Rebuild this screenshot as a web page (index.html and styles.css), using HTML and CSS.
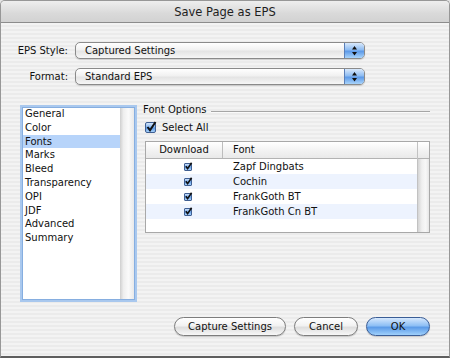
FILE: index.html
```html
<!DOCTYPE html>
<html lang="en">
<head>
<meta charset="UTF-8">
<meta name="viewport" content="width=device-width, initial-scale=1.0">
<title>Save Page as EPS</title>
<link rel="stylesheet" href="styles.css">
</head>
<body>
  <div class="window">
    <div class="titlebar">Save Page as EPS</div>

    <div class="content">
      <div class="field">
        <span class="field-label">EPS Style:</span>
        <div class="popup">
          <span class="popup-text">Captured Settings</span>
          <span class="popup-arrows">
            <svg width="19" height="17" viewBox="0 0 19 17"><path d="M7 7.5h5L9.5 4z M7 10h5l-2.5 3.5z" fill="#111"/></svg>
          </span>
        </div>
      </div>
      <div class="field">
        <span class="field-label">Format:</span>
        <div class="popup">
          <span class="popup-text">Standard EPS</span>
          <span class="popup-arrows">
            <svg width="19" height="17" viewBox="0 0 19 17"><path d="M7 7.5h5L9.5 4z M7 10h5l-2.5 3.5z" fill="#111"/></svg>
          </span>
        </div>
      </div>

      <div class="main">
        <div class="list">
          <ul class="list-items">
            <li>General</li>
            <li>Color</li>
            <li class="selected">Fonts</li>
            <li>Marks</li>
            <li>Bleed</li>
            <li>Transparency</li>
            <li>OPI</li>
            <li>JDF</li>
            <li>Advanced</li>
            <li>Summary</li>
          </ul>
          <div class="list-scroll"></div>
        </div>

        <div class="pane">
          <div class="group-title"><span>Font Options</span></div>
          <div class="check-row">
            <span class="checkbox">
              <svg width="13" height="13" viewBox="0 0 13 13"><path d="M2.5 6l2.5 3.2L10.5 1" fill="none" stroke="#111" stroke-width="2"/></svg>
            </span>
            <span>Select All</span>
          </div>

          <div class="table">
            <div class="table-body">
              <div class="thead">
                <div class="col-dl">Download</div>
                <div class="col-font">Font</div>
              </div>
              <div class="row">
                <div class="col-dl"><span class="mini-check"><svg width="9" height="9" viewBox="0 0 9 9"><path d="M1.8 4.2l1.8 2.4L7.6 0.8" fill="none" stroke="#111" stroke-width="1.6"/></svg></span></div>
                <div class="col-font">Zapf Dingbats</div>
              </div>
              <div class="row">
                <div class="col-dl"><span class="mini-check"><svg width="9" height="9" viewBox="0 0 9 9"><path d="M1.8 4.2l1.8 2.4L7.6 0.8" fill="none" stroke="#111" stroke-width="1.6"/></svg></span></div>
                <div class="col-font">Cochin</div>
              </div>
              <div class="row">
                <div class="col-dl"><span class="mini-check"><svg width="9" height="9" viewBox="0 0 9 9"><path d="M1.8 4.2l1.8 2.4L7.6 0.8" fill="none" stroke="#111" stroke-width="1.6"/></svg></span></div>
                <div class="col-font">FrankGoth BT</div>
              </div>
              <div class="row">
                <div class="col-dl"><span class="mini-check"><svg width="9" height="9" viewBox="0 0 9 9"><path d="M1.8 4.2l1.8 2.4L7.6 0.8" fill="none" stroke="#111" stroke-width="1.6"/></svg></span></div>
                <div class="col-font">FrankGoth Cn BT</div>
              </div>
            </div>
            <div class="table-scroll">
              <div class="corner"></div>
              <div class="track"></div>
            </div>
          </div>
        </div>
      </div>

      <div class="buttons">
        <button class="btn btn-wide">Capture Settings</button>
        <button class="btn">Cancel</button>
        <button class="btn btn-default">OK</button>
      </div>
    </div>
  </div>
</body>
</html>
```

FILE: styles.css
```css
html, body {
  margin: 0;
  padding: 0;
  background: #e4e4e4;
}

body {
  font-family: "Lucida Grande", "DejaVu Sans", sans-serif;
  font-size: 10px;
  color: #111;
}

.window {
  box-sizing: border-box;
  width: 450px;
  height: 358px;
  border: 1px solid #979797;
  border-bottom: 2px solid #5e5e5e;
  border-radius: 5px 5px 0 0;
  overflow: hidden;
  background: repeating-linear-gradient(#ebebeb 0, #ebebeb 2px, #f3f3f3 2px, #f3f3f3 4px);
}

.titlebar {
  height: 21px;
  line-height: 22px;
  text-align: center;
  font-size: 11.5px;
  color: #1e1e1e;
  background: linear-gradient(#eeeeee, #d9d9d9 60%, #d2d2d2);
  border-bottom: 1px solid #8c8c8c;
}

.content {
  padding-top: 19px;
}

/* popup rows */
.field {
  display: flex;
  align-items: center;
  margin-bottom: 9px;
}

.field-label {
  width: 67px;
  text-align: right;
  margin-right: 7px;
}

.popup {
  box-sizing: border-box;
  display: flex;
  width: 290px;
  height: 17px;
  border: 1px solid #8a8a8a;
  border-radius: 5px;
  background: linear-gradient(#ffffff, #f1f1f1 45%, #e4e4e4 55%, #f6f6f6);
  box-shadow: 0 1px 1px rgba(0, 0, 0, 0.15);
  overflow: hidden;
}

.popup-text {
  flex: 1;
  line-height: 15px;
  padding-left: 9px;
}

.popup-arrows {
  width: 19px;
  border-left: 1px solid #5a7fb8;
  background: linear-gradient(#d9e9fc, #8ebcf2 45%, #5d9ae8 55%, #a9d4fb);
}

.popup-arrows svg {
  display: block;
  margin-top: -1px;
}

/* main area */
.main {
  display: flex;
  margin-top: 20px;
}

.list {
  box-sizing: border-box;
  display: flex;
  width: 117px;
  height: 197px;
  margin-left: 19px;
  border: 2px solid #a9c8ee;
  box-shadow: inset 0 0 0 1px #86aee0;
  background: #fff;
  padding: 0 1px 1px 1px;
}

.list-items {
  flex: 1;
  list-style: none;
  margin: 0;
  padding: 0;
}

.list-items li {
  height: 13.8px;
  line-height: 13.8px;
  padding-left: 2px;
}

.list-items li.selected {
  background: #b7d4fa;
}

.list-scroll {
  width: 14px;
  margin-top: 1px;
  background: linear-gradient(to right, #cfcfcf, #eeeeee 25%, #fafafa 60%, #e9e9e9);
}

.pane {
  width: 287px;
  margin-left: 6px;
  margin-top: -1px;
}

.group-title {
  display: flex;
  align-items: center;
  line-height: 12px;
}

.group-title::after {
  content: "";
  flex: 1;
  height: 1px;
  margin-left: 4px;
  margin-top: 2px;
  background: #a6a6a6;
  box-shadow: 0 1px 0 #fafafa;
}

.check-row {
  display: flex;
  align-items: center;
  margin-top: 6px;
  margin-left: 2px;
}

.checkbox {
  box-sizing: border-box;
  position: relative;
  width: 11px;
  height: 11px;
  margin-right: 6px;
  border: 1px solid #3f5f93;
  border-radius: 2px;
  background: linear-gradient(#d6e7fc, #86b7f0 45%, #5b97e5 55%, #a8d2fa);
}

.checkbox svg {
  position: absolute;
  left: -1px;
  top: -2px;
}

/* font table */
.table {
  box-sizing: border-box;
  display: flex;
  width: 285px;
  height: 92px;
  margin-top: 8px;
  margin-left: 2px;
  border: 1px solid #a8a8a8;
  background: #fff;
}

.table-body {
  flex: 1;
}

.thead {
  display: flex;
  height: 16px;
  line-height: 16px;
  border-bottom: 1px solid #b3b3b3;
  background: linear-gradient(#ffffff, #f3f3f3 50%, #e9e9e9);
}

.col-dl {
  width: 76px;
  text-align: center;
  border-right: 1px solid #bdbdbd;
}

.col-font {
  padding-left: 10px;
}

.row {
  display: flex;
  height: 15px;
  line-height: 15px;
}

.row .col-dl {
  border-right: none;
  width: 77px;
  padding-left: 6px;
  box-sizing: border-box;
}

.row:nth-child(odd) {
  background: #edf3fe;
}

.mini-check {
  box-sizing: border-box;
  display: inline-block;
  position: relative;
  vertical-align: -1px;
  width: 8px;
  height: 8px;
  border: 1px solid #3f5f93;
  border-radius: 1px;
  background: linear-gradient(#d0e3fb, #6aa4ec 50%, #a6cff9);
}

.mini-check svg {
  position: absolute;
  left: -1px;
  top: -2px;
}

.table-scroll {
  display: flex;
  flex-direction: column;
  width: 11px;
  border-left: 1px solid #c2c2c2;
}

.corner {
  height: 16px;
  border-bottom: 1px solid #b3b3b3;
  background: linear-gradient(#ffffff, #f3f3f3 50%, #e9e9e9);
}

.track {
  flex: 1;
  background: linear-gradient(to right, #d4d4d4, #efefef 35%, #f7f7f7 70%, #e6e6e6);
}

/* buttons */
.buttons {
  display: flex;
  justify-content: flex-end;
  margin-top: 15px;
  padding-right: 19px;
}

.btn {
  box-sizing: border-box;
  height: 19px;
  width: 64px;
  margin-left: 8px;
  padding: 0;
  font-family: inherit;
  font-size: 10px;
  color: #111;
  border: 1px solid #7d7d7d;
  border-radius: 10px;
  background: linear-gradient(#ffffff, #f2f2f2 45%, #dedede 55%, #f7f7f7);
  box-shadow: 0 1px 1px rgba(0, 0, 0, 0.18);
}

.btn-wide {
  width: 112px;
}

.btn-default {
  border-color: #3a5d96;
  background: linear-gradient(#d6e8fd, #8ebff5 45%, #5c9be8 55%, #9fd0fb);
}
```
